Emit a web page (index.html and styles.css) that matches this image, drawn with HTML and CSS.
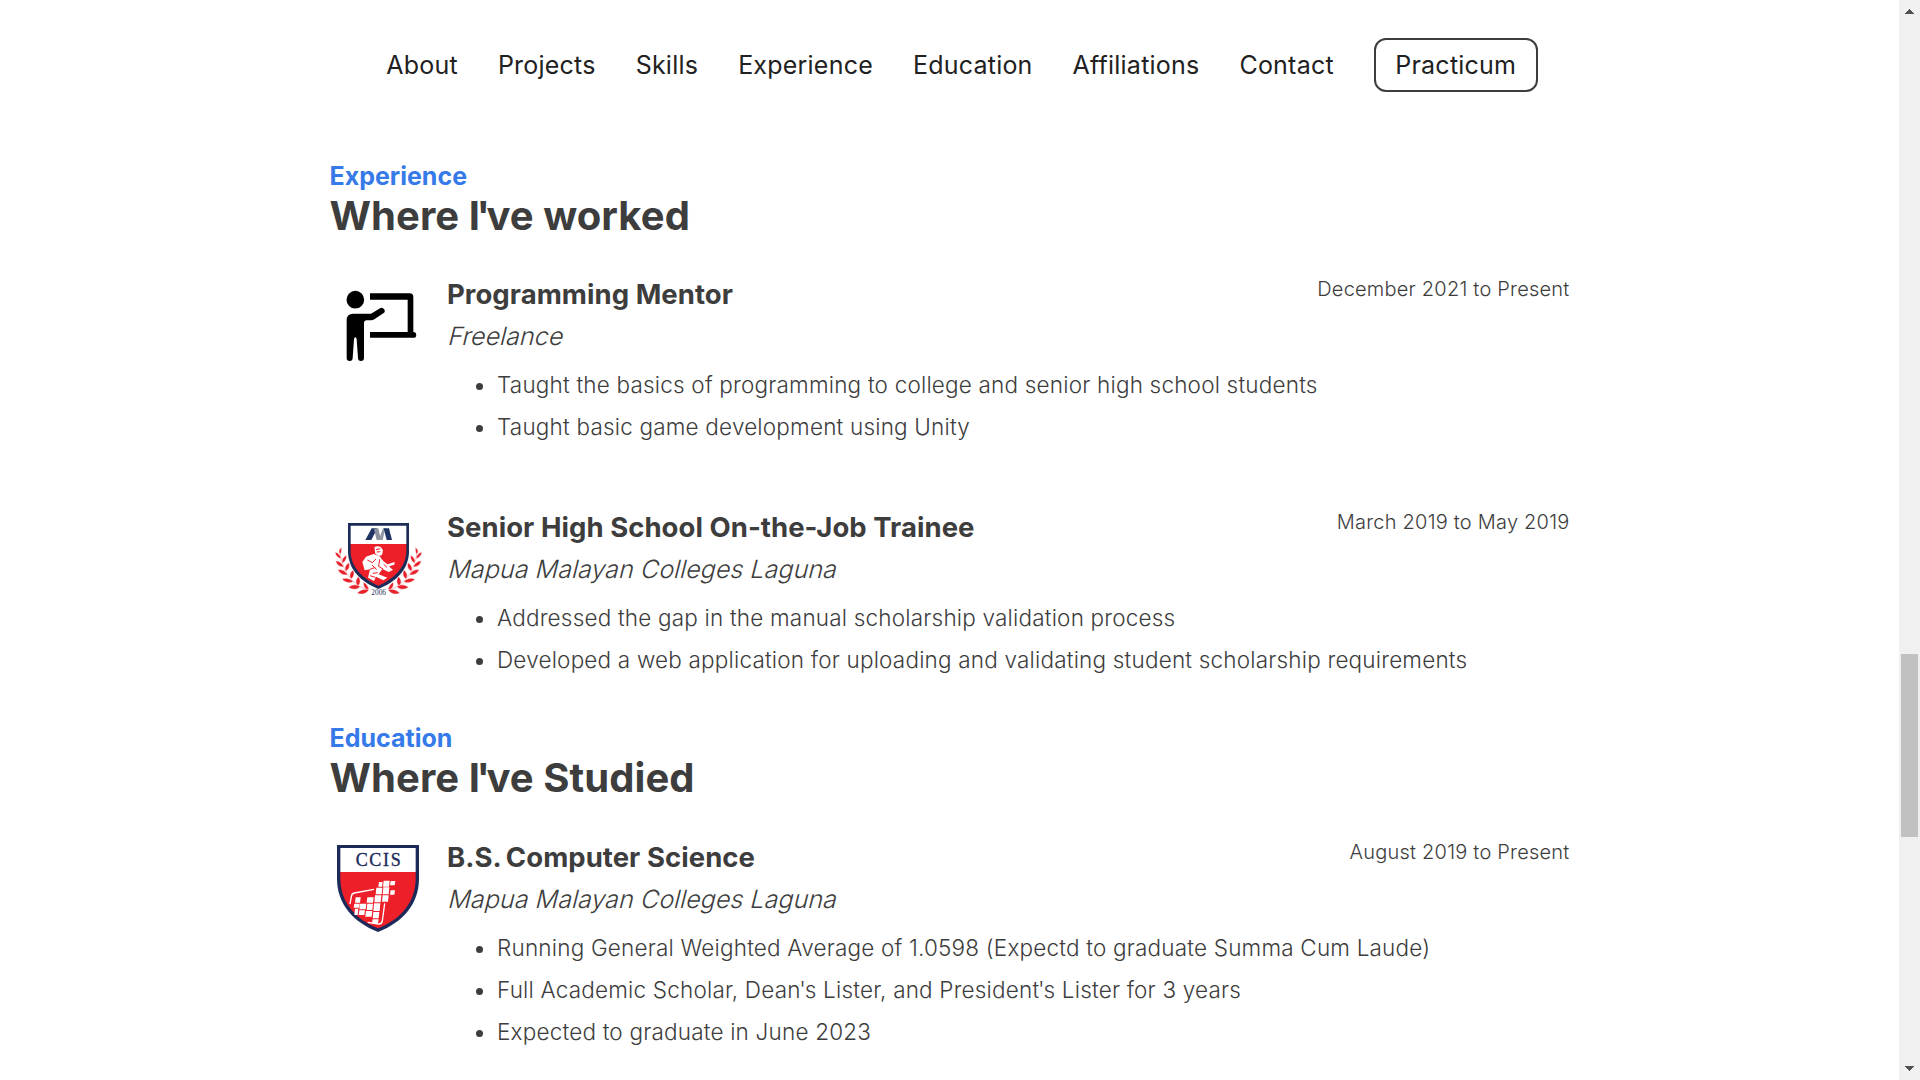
FILE: index.html
```html
<!DOCTYPE html>
<html lang="en">
<head>
<meta charset="utf-8">
<title>Portfolio</title>
<link rel="stylesheet" href="styles.css">
</head>
<body>
<div class="page">
  <header class="header">
    <nav class="nav">
      <a>About</a><a>Projects</a><a>Skills</a><a>Experience</a><a>Education</a><a>Affiliations</a><a>Contact</a><a class="nav-button">Practicum</a>
    </nav>
  </header>
  <main class="content">
    <section class="section">
      <p class="label">Experience</p>
      <h2>Where <span class="tight">I'</span>ve worked</h2>
      <article class="entry">
        <svg class="logo" viewBox="30 12 288 300">
          <circle cx="106" cy="89" r="26.5"/>
          <path d="M150 70H269Q280 70 280 82V186A8.5 8.5 0 0 1 280 203.500H150V186H263V89H150Z"/>
          <path d="M80 151Q80 131 99 131H153L180 115A9 9 0 0 1 190 130L163 148Q159 151 153 151H140Q132 151 132 159V264A9 9 0 0 1 114 264L110 208Q109 202 106 202Q103 202 102 208L98 264A9 9 0 0 1 80 264Z"/>
        </svg>
        <div class="details">
          <h3>Programming Mentor</h3>
          <p class="place">Freelance</p>
          <ul>
            <li>Taught the basics of programming to college and senior high school students</li>
            <li>Taught basic game development using Unity</li>
          </ul>
        </div>
        <time>December 2021 to Present</time>
      </article>
      <article class="entry">
        <svg class="logo" viewBox="15 -9 288 300">
          <defs>
            <g id="branch" fill="#e8222d">
              <path d="M43 130Q50 180 80 212Q100 232 128 241" fill="none" stroke="#f08088" stroke-width="1.500"/>
              <g stroke="#fff" stroke-width="1.500">
              <path d="M48 112C48 122 48 128 44 133C38 128 38 119 48 112Z"/>
              <path d="M28 126C38 128 44 135 47 146C36 144 30 138 28 126Z"/>
              <path d="M62 136C64 147 59 155 50 160C47 150 52 141 62 136Z"/>
              <path d="M30 152C42 153 51 160 54 171C42 171 33 165 30 152Z"/>
              <path d="M70 158C74 169 70 178 60 184C55 173 60 164 70 158Z"/>
              <path d="M36 179C48 177 60 183 66 194C54 197 43 192 36 179Z"/>
              <path d="M82 180C88 190 85 201 76 207C69 197 73 187 82 180Z"/>
              <path d="M49 207C61 202 74 205 83 215C72 221 59 219 49 207Z"/>
              <path d="M98 200C106 209 105 220 97 228C88 219 89 209 98 200Z"/>
              <path d="M68 232C79 223 92 222 104 230C95 239 81 241 68 232Z"/>
              <path d="M114 216C124 223 129 231 130 240C119 239 111 229 114 216Z"/>
              <path d="M94 250C104 239 116 236 130 239C124 250 109 256 94 250Z"/>
              </g>
            </g>
          </defs>
          <use href="#branch" transform="translate(2 0)"/>
          <use href="#branch" transform="matrix(-1 0 0 1 319 0)"/>
          <path d="M69 39H252V127C250 180 213 216 160 237C108 216 71 180 69 127Z" fill="#1c2c58"/>
          <path d="M77 47H244V102H77Z" fill="#fff"/>
          <path d="M77 102H244V128C240 174 207 206 160 227C114 206 80 174 77 128Z" fill="#ed1f29"/>
          <path d="M121 90L140 55H157L139 90Z" fill="#1f3464"/>
          <path d="M147 58L155 55H160L168 90H155Z" fill="#8b929d"/>
          <path d="M161 90L174 55H181L173 90Z" fill="#9299a5"/>
          <path d="M176 55H192L201 90H185Z" fill="#1f3464"/>
          <g fill="#fff">
            <path d="M148 112Q158 106 168 112L174 121L171 135L161 138L151 131Z"/>
            <path d="M146 132L123 140L112 156L119 181L135 178L129 203L147 213L153 200L175 211L187 203L161 193L172 177L191 186L204 180L192 169L208 164L209 156L187 163L174 152L164 139Z"/>
          </g>
          <g fill="none" stroke="#ed1f29" stroke-width="3">
            <path d="M153 119L166 116M155 126L166 125M127 150L142 158L153 147M141 165L155 179M135 178L151 172M143 190L158 188M164 148L161 169L174 177M176 163L186 172M135 197L151 202"/>
          </g>
          <text x="161" y="255" text-anchor="middle" class="year">2006</text>
        </svg>
        <div class="details">
          <h3>Senior High School On-the-Job Trainee</h3>
          <p class="place">Mapua Malayan Colleges Laguna</p>
          <ul>
            <li>Addressed the gap in the manual scholarship validation process</li>
            <li>Developed a web application for uploading and validating student scholarship requirements</li>
          </ul>
        </div>
        <time>March 2019 to May 2019</time>
      </article>
    </section>
    <section class="section">
      <p class="label">Education</p>
      <h2>Where <span class="tight">I'</span>ve Studied</h2>
      <article class="entry">
        <svg class="logo" viewBox="15 6 288 300">
          <path d="M36 30H282V132C281 208 234 261 159 291C84 261 37 208 36 132Z" fill="#1b2a59"/>
          <path d="M46 39H272V111H46Z" fill="#fff"/>
          <path d="M46 111H272V132C271 201 229 252 159 280C89 252 47 201 46 132Z" fill="#ed1f29"/>
          <text x="162" y="94" text-anchor="middle" class="ccis">CCIS</text>
          <path d="M147 163L88 174Q80 176 79 184L75 207M179 205L172 258Q170 268 160 267L128 262" fill="none" stroke="#fff" stroke-width="4"/>
          <g fill="#fff">
            <path d="M162 141H173L171 155H160ZM176 137H194L192 155H174ZM197 138H211L209 151H195ZM154 158H172L170 178H152ZM175 157H193L191 178H173ZM197 166H210L208 179H195ZM150 181H169L167 202H148ZM173 181H191L189 200H171ZM92 187H107L105 203H90ZM127 187H146L144 203H125ZM88 206H104L102 218H86ZM105 206H124L122 223H103ZM127 206H144L142 225H125ZM147 205H166L164 228H145ZM90 221H100L98 240H88ZM103 226H120L118 240H101ZM123 228H142L140 245H121ZM145 231H163L161 250H143ZM143 253H161L159 264H141Z"/>
          </g>
        </svg>
        <div class="details">
          <h3>B.S<span class="tight">.</span> Computer Science</h3>
          <p class="place">Mapua Malayan Colleges Laguna</p>
          <ul>
            <li>Running General Weighted Average of 1.0598 (Expectd to graduate Summa Cum Laude)</li>
            <li>Full Academic Scholar, Dea<span class="tight">n'</span>s Lister, and Presiden<span class="tight">t'</span>s Lister for 3 years</li>
            <li>Expected to graduate in June 2023</li>
          </ul>
        </div>
        <time>August 2019 to Present</time>
      </article>
    </section>
  </main>
</div>
<aside class="scrollbar">
  <svg class="arrow" viewBox="0 0 9 5"><path d="M4 0H5V1H6V2H7V3H8V4H9V5H0V4H1V3H2V2H3V1H4Z"/></svg>
  <div class="thumb"></div>
  <svg class="arrow" viewBox="0 0 9 5"><path d="M0 0H9V1H8V2H7V3H6V4H5V5H4V4H3V3H2V2H1V1H0Z"/></svg>
</aside>
</body>
</html>
```
FILE: styles.css
```css
* { box-sizing: border-box; margin: 0; padding: 0; }
body {
  display: flex;
  height: 1080px;
  overflow: hidden;
  background: #fff;
  color: #3d3d3d;
  font-family: Inter, sans-serif;
  font-weight: 300;
}
.page { flex: 1; }
.header { padding-top: 38px; }
.nav {
  display: flex;
  justify-content: center;
  align-items: center;
  gap: 40px;
  padding-left: 25px;
  height: 54px;
  color: #212121;
  font-size: 25px;
  font-weight: 400;
  line-height: 50px;
  letter-spacing: 0.22px;
}
.nav-button {
  padding: 0 19.5px;
  border: 2px solid #3d3d3d;
  border-radius: 12px;
}
.content { width: 1240px; margin: 69px auto 0; }
.section + .section { margin-top: 42px; }
.label {
  color: #357ae8;
  font-size: 25px;
  font-weight: 700;
  line-height: 31px;
}
h2 { font-size: 40px; font-weight: 700; line-height: 48px; letter-spacing: 0.08px; margin-bottom: 34px; }
.section + .section h2 { margin-bottom: 35px; }
.tight { letter-spacing: -0.09em; }
li .tight { letter-spacing: -0.05em; }
.entry { display: flex; align-items: flex-start; }
.entry + .entry { margin-top: 59px; }
.logo { width: 96px; height: 100px; margin-right: 21.5px; }
.details { flex: 1; }
h3 { font-size: 27.5px; font-weight: 700; line-height: 41px; letter-spacing: 0.05px; white-space: nowrap; }
.place {
  font-size: 25px;
  line-height: 42px;
  letter-spacing: 0.09px;
  transform: skewX(-14deg);
  transform-origin: 0 30px;
}
ul { margin-top: 7px; padding-left: 50px; }
li { font-size: 22.5px; line-height: 42px; letter-spacing: 0.19px; white-space: nowrap; }
time { width: 0; display: flex; justify-content: flex-end; white-space: nowrap; font-size: 20px; line-height: 30px; letter-spacing: 0.22px; }
.year { fill: #1c2c58; font: 22px "Liberation Serif", serif; }
.ccis { fill: #1b2a59; stroke: #1b2a59; stroke-width: 1; font: 54px "Liberation Serif", serif; letter-spacing: 5px; }
.scrollbar {
  display: flex;
  flex-direction: column;
  align-items: center;
  width: 21px;
  padding: 9px 0;
  background: #f0f0f0;
}
.arrow { width: 9px; height: 5px; fill: #505050; }
.thumb { width: 17px; height: 183px; margin: 640px 0 229px; background: #c1c1c1; }
```
